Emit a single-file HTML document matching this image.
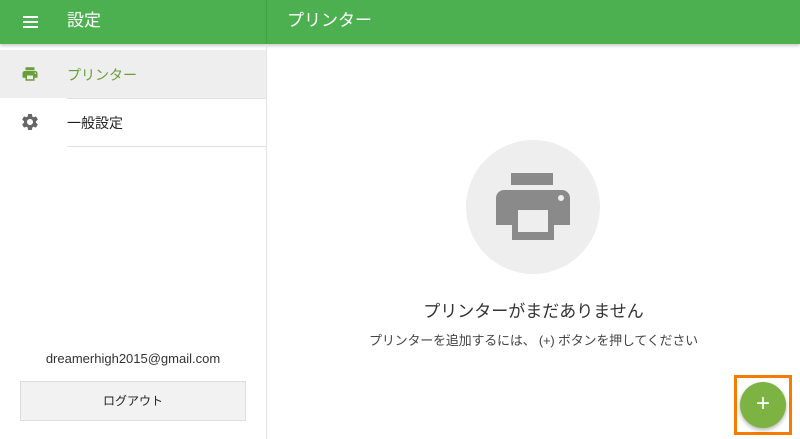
<!DOCTYPE html><html><head><meta charset="utf-8"><style>
body{margin:0;width:800px;height:439px;overflow:hidden;background:#fff;font-family:"Liberation Sans","Noto Sans CJK JP",sans-serif;position:relative}
.hdr{position:absolute;left:0;top:0;width:800px;height:44px;background:#4caf50;box-shadow:0 2px 3px rgba(0,0,0,.2)}
.t{position:absolute;color:#fff;font-size:17px;top:0;line-height:42px}
.sb{position:absolute;left:266px;top:44px;width:1px;height:395px;background:#e4e4e4}
.item{position:absolute;left:0;width:266px;height:48px;font-size:14px}
.item span{position:absolute;left:67px;top:15px}
.line{position:absolute;left:67px;width:199px;height:1px;background:#e0e0e0}
</style></head><body>
<div class="hdr">
<div style="position:absolute;left:23px;top:16px;width:15px;height:2px;background:#fff;box-shadow:0 5px 0 #fff,0 10px 0 #fff"></div>
<div class="t" style="left:67px">設定</div>
<div style="position:absolute;left:266px;top:0;width:1px;height:44px;background:#43a047"></div>
<div class="t" style="left:287px">プリンター</div>
</div>
<div class="sb"></div>
<div class="item" style="top:50px;background:#eee;color:#689f38"><span>プリンター</span>
<svg style="position:absolute;left:20px;top:15px" width="20" height="18" viewBox="0 0 24 24"><path fill="#689f38" d="M19 8H5c-1.66 0-3 1.34-3 3v6h4v4h12v-4h4v-6c0-1.660-1.34-3-3-3zm-3 11H8v-5h8v5zm3-7c-.55 0-1-.45-1-1s.45-1 1-1 1 .45 1 1-.45 1-1 1zm-1-9H6v4h12V3z"/></svg></div>
<div class="line" style="top:98px"></div>
<div class="item" style="top:98px;color:#222"><span>一般設定</span>
<svg style="position:absolute;left:20px;top:14px" width="20" height="20" viewBox="0 0 24 24"><path fill="#666" d="M19.14 12.94c.04-.3.06-.61.06-.94 0-.32-.02-.64-.07-.94l2.03-1.58a.49.49 0 0 0 .12-.61l-1.92-3.320a.49.49 0 0 0-.59-.22l-2.39.96c-.5-.38-1.03-.7-1.62-.94l-.36-2.54a.484.484 0 0 0-.48-.41h-3.84c-.24 0-.43.17-.47.41l-.36 2.54c-.59.24-1.13.57-1.62.94l-2.39-.96a.49.49 0 0 0-.59.22L2.74 8.87c-.12.21-.08.47.12.61l2.03 1.58c-.05.3-.09.63-.09.94s.02.64.07.94l-2.03 1.58a.49.49 0 0 0-.12.61l1.92 3.32c.12.22.37.29.59.22l2.39-.96c.5.38 1.03.7 1.62.94l.36 2.54c.05.24.24.41.48.41h3.84c.24 0 .44-.17.47-.41l.36-2.54c.59-.24 1.13-.56 1.62-.94l2.39.96c.22.08.47 0 .59-.22l1.92-3.32c.12-.22.07-.47-.12-.61l-2.010-1.58zM12 15.6c-1.98 0-3.6-1.62-3.6-3.6s1.62-3.6 3.6-3.6 3.6 1.62 3.6 3.6-1.62 3.6-3.6 3.6z"/></svg></div>
<div class="line" style="top:146px"></div>
<div style="position:absolute;left:0;width:266px;top:351px;text-align:center;font-size:13px;color:#333">dreamerhigh2015@gmail.com</div>
<div style="position:absolute;left:20px;top:381px;width:226px;height:40px;background:#f2f2f2;border:1px solid #ddd;box-sizing:border-box;text-align:center;line-height:38px;font-size:12px;color:#222">ログアウト</div>
<div style="position:absolute;left:466px;top:140px;width:134px;height:134px;border-radius:50%;background:#eee"></div>
<svg style="position:absolute;left:496px;top:173px" width="74" height="67" viewBox="0 0 74 67">
<rect x="15" y="0" width="42" height="12" fill="#8a8a8a"/>
<path d="M8 17h58a8 8 0 0 1 8 8v27h-16v15H16V52H0V25a8 8 0 0 1 8-8z" fill="#8a8a8a"/>
<rect x="22" y="37" width="30" height="22" fill="#eee"/>
<circle cx="65" cy="25" r="3" fill="#eee"/></svg>
<div style="position:absolute;left:267px;width:533px;top:297px;text-align:center;font-size:17px;color:#333">プリンターがまだありません</div>
<div style="position:absolute;left:267px;width:533px;top:330px;text-align:center;font-size:13px;color:#444;letter-spacing:-0.2px">プリンターを追加するには、 (+) ボタンを押してください</div>
<div style="position:absolute;left:734px;top:375px;width:52px;height:54px;border:3px solid #f57c00"></div>
<div style="position:absolute;left:740px;top:382px;width:46px;height:46px;border-radius:50%;background:#7cb342;box-shadow:0 2px 4px rgba(0,0,0,.3);color:#fff;font-size:24px;text-align:center;line-height:44px">+</div>
</body></html>
